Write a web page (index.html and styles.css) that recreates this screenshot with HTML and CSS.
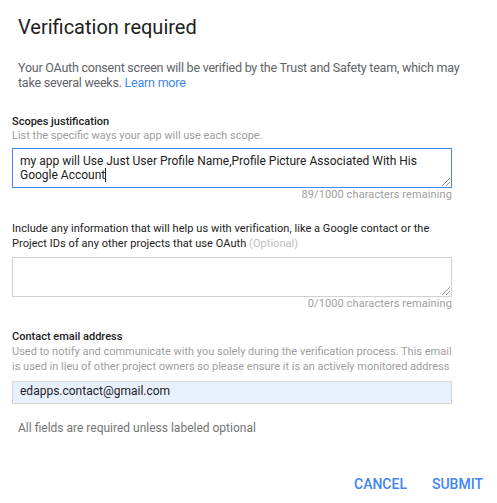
FILE: index.html
```html
<!DOCTYPE html>
<html>
<head>
<meta charset="utf-8">
<link rel="stylesheet" href="styles.css">
</head>
<body>
<div class="dialog">
  <h1 class="title">Verification required</h1>
  <p class="intro">Your OAuth consent screen will be verified by the Trust and Safety team, which may take several weeks. <a class="link" href="#">Learn more</a></p>

  <div class="field field-scopes">
    <div class="label label-strong">Scopes justification</div>
    <div class="hint">List the specific ways your app will use each scope.</div>
    <div class="textarea focused">my app will Use Just User Profile Name,Profile Picture Associated With His Google Account<span class="caret"></span><span class="grip"></span></div>
    <div class="counter">89/1000 characters remaining</div>
  </div>

  <div class="field field-info">
    <div class="label label-long">Include any information that will help us with verification, like a Google contact or the Project IDs of any other projects that use OAuth <span class="optional">(Optional)</span></div>
    <div class="textarea"><span class="grip"></span></div>
    <div class="counter">0/1000 characters remaining</div>
  </div>

  <div class="field field-email">
    <div class="label label-strong">Contact email address</div>
    <div class="hint hint-long">Used to notify and communicate with you solely during the verification process. This email is used in lieu of other project owners so please ensure it is an actively monitored address</div>
    <div class="input">edapps.contact@gmail.com</div>
  </div>

  <p class="note">All fields are required unless labeled optional</p>

  <div class="actions">
    <button class="btn">CANCEL</button>
    <button class="btn">SUBMIT</button>
  </div>
</div>
</body>
</html>
```
FILE: styles.css
```css
* { box-sizing: border-box; }
html, body { margin: 0; padding: 0; background: #fff; }
body { font-family: Roboto, "Noto Sans", Arial, sans-serif; color: #212121; }
.dialog { width: 497px; height: 503px; padding-top: 15px; overflow: hidden; }
.title { margin: 0 0 0 18px; font-size: 20px; font-weight: 400; line-height: 24px; color: #212121; }
.intro { margin: 21px 0 0 18px; width: 460px; font-size: 12.5px; line-height: 15px; color: #5f6368; letter-spacing: -0.23px; }
.link { color: #4285f4; text-decoration: none; }
.field { margin-left: 12px; width: 440px; }
.field-scopes { margin-top: 25px; }
.label { font-size: 11px; line-height: 14px; color: #212121; }
.label-strong { font-weight: 500; }
.label-long { line-height: 15px; letter-spacing: 0.05px; }
.optional { color: #bdbdbd; }
.hint { font-size: 11px; line-height: 14px; color: #9e9e9e; }
.hint-long { line-height: 15px; width: 446px; }
.textarea { position: relative; margin-top: 5px; height: 40px; border: 1px solid #d0d0d0; padding: 5px 7px; font-size: 12px; line-height: 14px; color: #212121; }
.textarea.focused { border-color: #4285f4; }
.caret { display: inline-block; width: 1px; height: 14px; background: #212121; vertical-align: -3px; }
.grip { position: absolute; right: 1px; bottom: 1px; width: 8px; height: 8px;
  background: linear-gradient(135deg, transparent 0 45%, #999 45% 52%, transparent 52% 70%, #999 70% 77%, transparent 77%); }
.counter { text-align: right; font-size: 11px; line-height: 14px; color: #9e9e9e; letter-spacing: 0.1px; }
.field-info { margin-top: 19px; }
.field-info .textarea { margin-top: 6px; }
.field-email { margin-top: 19px; }
.input { margin-top: 7px; height: 23px; border: 1px solid #d6d6d6; background: #e8f0fe; padding: 1px 7px; font-size: 12px; line-height: 16px; color: #212121; }
.note { margin: 17px 0 0 18px; font-size: 12px; line-height: 15px; color: #757575; }
.actions { display: flex; justify-content: flex-end; gap: 25px; margin-top: 40px; padding-right: 14px; }
.btn { background: none; border: 0; padding: 0; font-family: inherit; font-size: 14px; font-weight: 500; color: #4285f4; line-height: 17px; }
```
